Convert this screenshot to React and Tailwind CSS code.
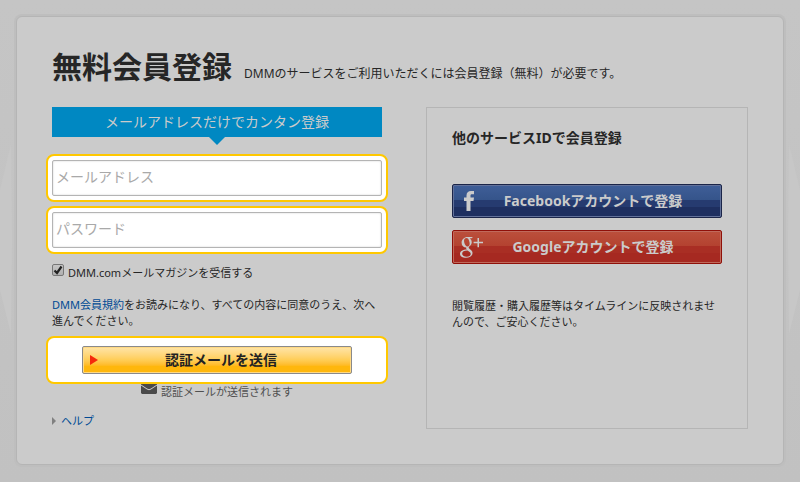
const Highlight = ({ children }) => (
  <div className="-mx-1.5 rounded-lg border-2 border-[#ffc800] bg-white p-1">
    {children}
  </div>
);

const TextField = ({ label, type }) => (
  <Highlight>
    <input
      type={type}
      aria-label={label}
      placeholder={label}
      className="block h-9 w-full rounded-xs border border-[#b4b4b4] bg-white px-[3px] pb-1 text-sm text-[#333] shadow-[inset_0_0_2px_#ccc] outline-none placeholder:text-[#a9a9a9]"
    />
  </Highlight>
);

const FacebookIcon = () => (
  <svg viewBox="0 0 10 20" className="ml-1 h-5 w-2.5 fill-[#cbcbcb]" aria-hidden="true">
    <path d="M2.500 20V10H0V6.500H2.500V4.500C2.500 1.500 4.200 0 7 0H10V3.300H8.200C7 3.300 6.500 3.800 6.500 4.700V6.500H10L9.500 10H6.500V20Z" />
  </svg>
);

const GoogleIcon = () => (
  <svg viewBox="0 0 23 21" className="h-[21px] w-[23px] fill-[#cbcbcb]" aria-hidden="true">
    <path
      fillRule="evenodd"
      d="M7.500 0H13L11.500 1.300H9.700C12.600 3.600 12.200 7.200 9.800 9C8.200 10.300 8.300 10.900 10 12.200C12 13.700 12.500 14.600 12.500 16C12.500 18.800 9.800 20.800 6 20.800C2.500 20.800 0 19.400 0 17C0 14.300 2.800 12.700 6.900 12.600C6.200 11.900 6 11.300 6.300 10.500C3.500 10.500 1.600 8.600 1.600 5.700C1.600 2.500 4.300 0 7.500 0ZM6.400 1C4.500 1 3.700 2.700 4.200 5.200C4.700 7.800 6 9.400 7.500 9.400C9.400 9.400 10 7.800 9.500 5.200C9 2.600 7.900 1 6.400 1ZM7.500 13.500C4 13.600 2.200 14.700 2.200 16.600C2.200 18.500 3.900 19.700 6.700 19.700C9.300 19.700 10.700 18.600 10.700 17C10.700 15.600 9.800 15 7.500 13.500Z"
    />
    <path d="M17.500 1H19V4.800H23V6.300H19V10.200H17.500V6.300H13.600V4.800H17.500Z" />
  </svg>
);

const Register = () => (
  <form onSubmit={(e) => e.preventDefault()}>
    <p className="bg-[#0088c2] text-center text-sm leading-[30px] text-[#cbcbcb]">
      メールアドレスだけでカンタン登録
    </p>
    <svg viewBox="0 0 16 8" className="mx-auto h-2 w-4 fill-[#0088c2]" aria-hidden="true">
      <path d="M0 0H16L8 8Z" />
    </svg>

    <div className="mt-[9px] flex flex-col gap-1">
      <TextField label="メールアドレス" type="email" />
      <TextField label="パスワード" type="password" />
    </div>

    <label className="mt-2.5 flex items-start gap-1 leading-[18px]">
      <span className="grid">
        <input
          type="checkbox"
          defaultChecked
          className="peer col-start-1 row-start-1 size-3 appearance-none rounded-xs border border-[#777] bg-linear-to-b from-[#c6c6c6] to-[#b0b0b0]"
        />
        <svg
          viewBox="0 0 12 12"
          className="pointer-events-none invisible col-start-1 row-start-1 size-3 fill-none stroke-[#222] peer-checked:visible"
          aria-hidden="true"
        >
          <path d="M2.500 6.500L5 9L9.500 2.500" strokeWidth="2.200" />
        </svg>
      </span>
      DMM.comメールマガジンを受信する
    </label>

    <p className="mt-[15px] mb-[7px]">
      <a href="#terms" className="text-[#004a94]">
        DMM会員規約
      </a>
      をお読みになり、すべての内容に同意のうえ、次へ進んでください。
    </p>

    <Highlight>
      <div className="px-[30px] py-1">
        <button
          type="submit"
          className="flex h-7 w-full items-center rounded-xs border border-[#8a8a8a] bg-linear-to-b from-[#ffe5a8] from-0% via-[#ffcd55] via-50% to-[#ffb70c] to-75% px-[7px] text-sm font-bold text-[#222] shadow-[inset_0_0_0_1px_#ffd983]"
        >
          <svg viewBox="0 0 8 10" className="h-2.5 w-2 fill-[#f52a0c]" aria-hidden="true">
            <path d="M0 0L8 5L0 10Z" />
          </svg>
          <span className="flex-1">認証メールを送信</span>
        </button>
      </div>
    </Highlight>

    <p className="flex justify-center gap-1 text-[#505050]">
      <svg viewBox="0 0 16 10" className="h-2.5 w-4" aria-hidden="true">
        <path d="M0 0H16V9L15 10H1L0 9Z" fill="#4a4a4a" />
        <path d="M0 1L6 5Q8 6.500 10 5L16 1" fill="none" stroke="#cbcbcb" />
      </svg>
      認証メールが送信されます
    </p>

    <a href="#help" className="mt-[13px] flex items-center gap-[5px] text-[#004a94]">
      <svg viewBox="0 0 4 8" className="h-2 w-1 fill-[#808080]" aria-hidden="true">
        <path d="M0 0L4 4L0 8Z" />
      </svg>
      ヘルプ
    </a>
  </form>
);

const SocialLogin = () => (
  <section className="border border-[#b5b5b5] px-[25px] py-5">
    <h2 className="text-sm leading-5 font-bold">他のサービスIDで会員登録</h2>
    <div className="mt-9 flex flex-col gap-3">
      <button
        type="button"
        className="flex h-[34px] items-center rounded-xs border border-[#1b2549] bg-linear-to-b from-[#3f5e98] from-0% via-[#35548a] via-47% to-[#263b70] to-48% px-[7px] text-sm font-bold text-[#cbcbcb] shadow-[inset_0_0_0_1px_#62719a,inset_0_-10px_0_#1e2f60]"
      >
        <span className="w-6">
          <FacebookIcon />
        </span>
        <span className="flex-1 pr-3">Facebookアカウントで登録</span>
      </button>
      <button
        type="button"
        className="flex h-[34px] items-center rounded-xs border border-[#8f1009] bg-linear-to-b from-[#bb503c] from-0% via-[#b44230] via-47% to-[#a92e24] to-48% px-[7px] text-sm font-bold text-[#cbcbcb] shadow-[inset_0_0_0_1px_#c06a5c,inset_0_-10px_0_#a62921]"
      >
        <span className="w-6">
          <GoogleIcon />
        </span>
        <span className="flex-1 pr-3">Googleアカウントで登録</span>
      </button>
    </div>
    <p className="mt-[34px]">
      閲覧履歴・購入履歴等はタイムラインに反映されませんので、ご安心ください。
    </p>
  </section>
);

export default function App() {
  return (
    <div className="relative min-h-screen bg-linear-to-b from-[#c5c5c5] to-[#c1c1c1] p-4 font-['Noto_Sans','Noto_Sans_CJK_JP',sans-serif] text-[11px] leading-4 text-[#262626]">
      {/* faint facets on the page edges */}
      <svg
        viewBox="0 0 12 190"
        className="absolute top-36 left-0 h-[190px] w-3 fill-[#c7c7c7]"
        aria-hidden="true"
      >
        <path d="M11 0L0 46V146L11 190L12 95Z" />
      </svg>
      <svg
        viewBox="0 0 12 190"
        className="absolute top-36 right-0 h-[190px] w-3 fill-[#c7c7c7]"
        aria-hidden="true"
      >
        <path d="M1 0L12 46V146L1 190L0 95Z" />
      </svg>
      <main className="rounded-md border border-[#b5b5b5] bg-[#cbcbcb] px-[35px] pt-8 pb-[35px] shadow-[0_0_0_2px_#bebebe]">
        <header className="mb-[22px] flex flex-wrap items-baseline gap-x-3">
          <h1 className="text-3xl leading-9 font-bold">無料会員登録</h1>
          <p className="text-xs">
            DMMのサービスをご利用いただくには会員登録（無料）が必要です。
          </p>
        </header>
        <div className="grid gap-11 sm:grid-cols-[330fr_322fr]">
          <Register />
          <SocialLogin />
        </div>
      </main>
    </div>
  );
}
